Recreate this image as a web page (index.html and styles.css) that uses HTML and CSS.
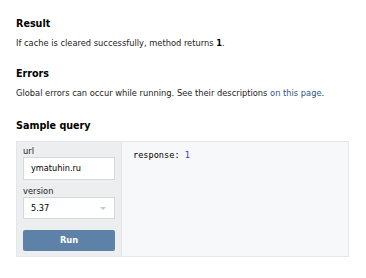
FILE: index.html
```html
<!DOCTYPE html>
<html>
<head>
<meta charset="utf-8">
<link rel="stylesheet" href="styles.css">
</head>
<body>
<div class="page">
  <h2 class="title t-result">Result</h2>
  <p class="text">If cache is cleared successfully, method returns <b>1</b>.</p>
  <h2 class="title t-errors">Errors</h2>
  <p class="text">Global errors can occur while running. See their descriptions <a class="link" href="#">on this page</a>.</p>
  <h2 class="title t-sample">Sample query</h2>
  <div class="panel">
    <div class="form">
      <div class="label">url</div>
      <div class="input">ymatuhin.ru</div>
      <div class="label label-2">version</div>
      <div class="input select">5.37<span class="arrow"></span></div>
      <div class="button">Run</div>
    </div>
    <div class="output"><span class="key">response:</span> <span class="num">1</span></div>
  </div>
</div>
</body>
</html>
```
FILE: styles.css
```css
html, body {
  margin: 0;
  padding: 0;
  background: #fff;
}
.page {
  padding: 18px 17px 0 16px;
  font-family: "DejaVu Sans", Verdana, sans-serif;
  color: #000;
}
.title {
  margin: 0;
  font-size: 9.6px;
  line-height: 12px;
  font-weight: bold;
  color: #000;
}
.text {
  margin: 7px 0 0 0;
  font-size: 8.3px;
  line-height: 12px;
  color: #222;
}
.text b {
  font-weight: bold;
  color: #000;
}
.link {
  color: #2a5885;
  text-decoration: none;
}
.t-errors {
  margin-top: 19px;
}
.t-sample {
  margin-top: 21px;
}
.panel {
  margin-top: 9px;
  width: 331px;
  height: 114px;
  border: 1px solid #e3e6eb;
  display: flex;
  background: #f7f8fa;
}
.form {
  width: 92px;
  padding: 3px 6px 0 6px;
  background: #edeef0;
  border-right: 1px solid #e3e6eb;
  display: flex;
  flex-direction: column;
}
.label {
  font-size: 8.3px;
  line-height: 12px;
  color: #222;
}
.label-2 {
  margin-top: 5px;
}
.input {
  box-sizing: border-box;
  height: 23px;
  border: 1px solid #d3d9de;
  background: #fff;
  padding: 0 7px;
  font-size: 8.2px;
  line-height: 21px;
  color: #000;
  position: relative;
}
.select {
  height: 22px;
  line-height: 20px;
}
.arrow {
  position: absolute;
  right: 8px;
  top: 9px;
  width: 0;
  height: 0;
  border-left: 3px solid transparent;
  border-right: 3px solid transparent;
  border-top: 3px solid #c2c9d1;
}
.button {
  margin-top: 11px;
  height: 21px;
  background: #5e81a8;
  border-radius: 2px;
  color: #fff;
  font-size: 8.3px;
  font-weight: bold;
  line-height: 21px;
  text-align: center;
}
.output {
  flex: 1;
  padding: 7px 11px 0 11px;
  font-family: "DejaVu Sans Mono", monospace;
  font-size: 8.6px;
  line-height: 12px;
  color: #000;
}
.num {
  color: #3434e0;
}
```
